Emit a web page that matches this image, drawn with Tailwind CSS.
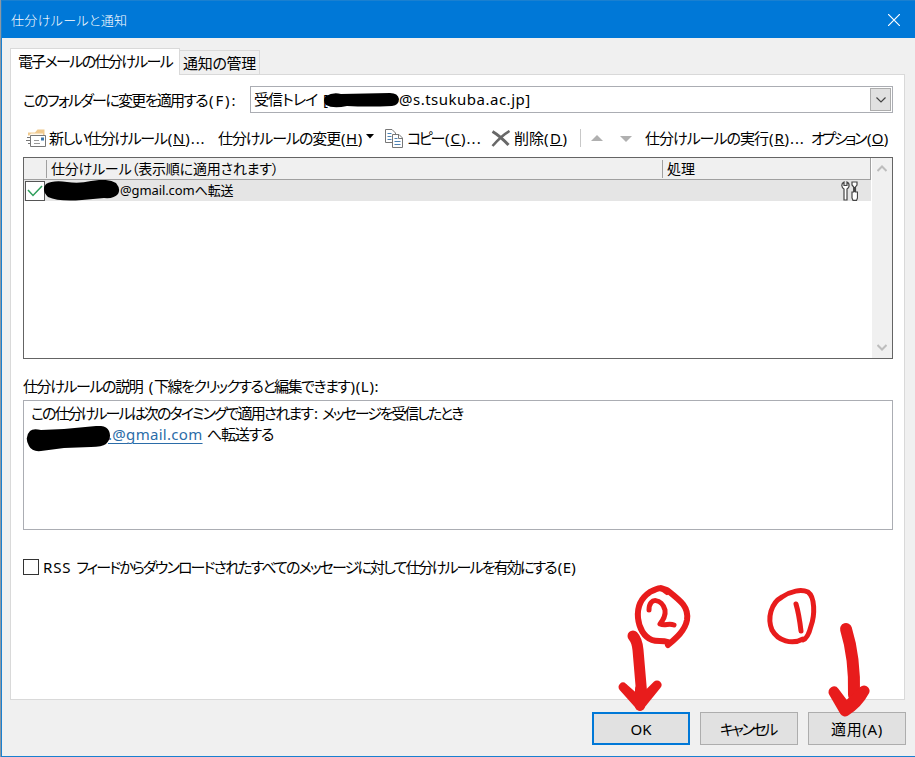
<!DOCTYPE html>
<html lang="ja">
<head>
    <meta charset="UTF-8">
    <meta name="viewport" content="width=device-width, initial-scale=1.0">
    <title>仕分けルールと通知</title>
    <script src="https://cdn.jsdelivr.net/npm/@tailwindcss/browser@4"></script>
</head>
<body class="relative flex h-[757px] w-[915px] overflow-hidden bg-[#8d98a3] pl-px font-['Noto_Sans','Noto_Sans_CJK_JP',sans-serif] text-[15px] leading-5 whitespace-nowrap text-black [font-feature-settings:'palt']">
    <div class="flex w-[914px] flex-col border-b border-l border-[#1a80d0] bg-[#f0f0f0]">
        <!-- Title bar -->
        <div class="flex h-[38px] shrink-0 items-center justify-between border-t border-[#1a80d0] bg-[#0078d7] pr-[15px] pl-[9px] text-white">
            <span class="text-[13px] font-light tracking-[0.35px]">仕分けルールと通知</span>
            <svg class="size-3" viewBox="0 0 12 12" fill="none" stroke="#fff" stroke-width="1.2"><path d="M0 0L12 12M12 0L0 12"/></svg>
        </div>

        <!-- Tabs -->
        <div class="flex h-9 shrink-0 items-end pl-2">
            <div class="relative z-10 -mb-px h-[27px] w-[170px] border border-b-0 border-[#d9d9d9] bg-white pt-[2px] pl-[7px]"><span class="tracking-[-1.65px]">電子メールの仕分けルール</span></div>
            <div class="h-6 w-20 border border-b-0 border-l-0 border-[#d9d9d9] pt-[2px] pl-[3px]"><span class="tracking-[-0.3px]">通知の管理</span></div>
        </div>

        <!-- Tab page -->
        <div class="ml-2 flex h-[626px] w-[895px] shrink-0 flex-col border border-[#d9d9d9] bg-white pr-[11px] pl-3">
            <div class="mt-[11px] flex h-[27px] shrink-0 items-center">
                <div class="w-[227px]"><span class="tracking-[-1.7px]">このフォルダーに変更を適用する</span><span class="ml-[2px] tracking-[1.9px]">(F):</span></div>
                <div class="flex h-[27px] w-[643px] items-center border border-[#abadb3] pr-px pl-[3px]">
                    <span class="-mt-px w-[69px] tracking-[-0.9px]">受信トレイ</span>
                    <span class="relative -mt-px w-[76px]">[<svg class="absolute top-[3px] left-0 h-4 w-[76px]" viewBox="0 0 76 16"><path d="M3 4Q10 0 18 2L67 1Q75 1 76 7Q76 13 69 14Q45 15 24 14Q10 17 3 13Q-1 8 3 4Z"/></svg></span>
                    <span class="-mt-px tracking-[0.5px]">@s.tsukuba.ac.jp]</span>
                    <div class="ml-auto flex h-[23px] w-[21px] items-center justify-center border border-[#adadad] bg-[#e1e1e1]">
                        <svg class="h-[6px] w-[10px]" viewBox="0 0 10 6" fill="none" stroke="#444" stroke-width="1.2"><path d="M.5 .5L5 5L9.5 .5"/></svg>
                    </div>
                </div>
            </div>

            <!-- Toolbar -->
            <div class="mt-[15px] flex h-5 shrink-0 items-center pl-[3px]">
                <svg class="h-[18px] w-[23px] shrink-0" viewBox="0 0 23 18" fill="none">
                    <path d="M2 6.500V3.500H9L11.500.5H18.500V6.500Z" fill="#efc98e"/><path d="M3 6.500L5 4.500H17V6.500Z" fill="#fff8ec"/>
                    <path d="M4.500 6.500h15v11h-15z" fill="#fff" stroke="#777"/><path d="M1 8.500h4M0 11.500h4M2 14.500h2" stroke="#777"/><path d="M8 11.500h5M8 14.500h6" stroke="#999"/><path d="M15 8.500h3v3h-3z" fill="#3a75ad"/>
                </svg>
                <div class="w-[169px] shrink-0"><span class="tracking-[-1.3px]">新しい仕分けルール</span><span class="ml-px tracking-[0.9px]">(<u>N</u>)...</span></div>
                <div class="w-[148px] shrink-0"><span class="tracking-[-1.1px]">仕分けルールの変更</span><span class="ml-px tracking-[0.5px]">(<u>H</u>)</span></div>
                <svg class="-mt-[3px] h-[5px] w-[9px] shrink-0" viewBox="0 0 9 5"><path d="M0 0H8L4 4.500Z"/></svg>
                <svg class="ml-[10px] h-[19px] w-[18px] shrink-0" viewBox="0 0 18 19" fill="none">
                    <path d="M7 13.500H.5V.5H7L10.500 4V6" stroke="#777"/><path d="M2.500 4.500h4M2.500 7.500h4M2.500 10.500h4" stroke="#4e83b4"/>
                    <path d="M7.500 5.500H14L17.500 9V18.500H7.500Z" fill="#fff" stroke="#777"/><path d="M13.500 5.500V9.500H17.500" stroke="#777"/><path d="M9.500 9.500h3M9.500 12.500h6M9.500 15.500h6" stroke="#4e83b4"/>
                </svg>
                <div class="ml-1 w-[84px] shrink-0"><span class="tracking-[-2.3px]">コピー</span><span class="ml-[2px] tracking-[1px]">(<u>C</u>)...</span></div>
                <svg class="h-[17px] w-5 shrink-0" viewBox="0 0 20 17" fill="none" stroke="#686868"><path d="M1.500 1.500Q9 6 17.500 15" stroke-width="3"/><path d="M18.500 1Q10 6 1.500 16" stroke-width="2.500"/></svg>
                <div class="ml-[3px] w-[66px] shrink-0"><span>削除</span><span class="tracking-[1.5px]">(<u>D</u>)</span></div>
                <div class="h-[18px] w-px shrink-0 bg-[#c8c8c8]"></div>
                <svg class="ml-[10px] h-[6px] w-3 shrink-0" viewBox="0 0 12 6"><path d="M0 6H12L6 0Z" fill="#b0b0b0"/></svg>
                <svg class="mt-[2px] ml-[17px] h-[6px] w-3 shrink-0" viewBox="0 0 12 6"><path d="M0 0H12L6 6Z" fill="#b0b0b0"/></svg>
                <div class="ml-[13px] w-[166px] shrink-0"><span class="tracking-[-1px]">仕分けルールの実行</span><span class="ml-px tracking-[0.9px]">(<u>R</u>)...</span></div>
                <div class="w-[80px] shrink-0"><span class="tracking-[-2.4px]">オプション</span><span class="ml-[2px] tracking-[0.3px]">(<u>O</u>)</span></div>
            </div>

            <!-- Rule list -->
            <div class="mt-[9px] flex h-[202px] w-[870px] shrink-0 border border-[#646464] text-sm">
                <div class="w-[847px]">
                    <div class="flex h-[22px] items-center border-r border-b border-[#a0a0a0] bg-[#f0f0f0]">
                        <div class="h-[18px] w-[23px] border-r border-[#a0a0a0]"></div>
                        <div class="flex h-[18px] w-[616px] items-center border-r border-[#a0a0a0] pl-1"><span class="tracking-[-0.2px]">仕分けルール（表示順に適用されます）</span></div>
                        <div class="pl-1"><span>処理</span></div>
                    </div>
                    <div class="flex h-[21px] items-center bg-[#e5e5e5] pl-px">
                        <div class="flex size-5 shrink-0 items-center justify-center border-[1.500px] border-[#555] bg-white">
                            <svg class="h-3 w-4" viewBox="0 0 16 12" fill="none" stroke="#2e9e5b" stroke-width="1.500"><path d="M1 5L6 10.500L15 1"/></svg>
                        </div>
                        <svg class="z-10 -ml-[2px] h-[21px] w-[77px] shrink-0" viewBox="0 0 77 21"><path d="M3 4Q10 0 24 2Q36 4 48 1Q65-2 73 3Q78 9 75 14Q71 19 61 18L39 20Q16 22 5 17Q-2 10 3 4Z"/></svg>
                        <span class="-mt-px text-[13px] tracking-[-0.1px]">@gmail.comへ転送</span>
                        <svg class="mr-[13px] ml-auto h-5 w-[17px] shrink-0" viewBox="0 0 17 20" fill="#fff" stroke="#444" stroke-width="1.200"><path d="M3 1V4.500H6V1Q8.500 2 8 5.500Q7.500 7 6 8V19H3V8Q1 7 .8 4.500Q.8 2 3 1Z"/><path d="M11 1H16V4L14.500 6V11H16.500V17L15.500 19.400H12L11 17V11H12.700V6L11 4Z"/><path d="M13.500 6V11" stroke-width="2"/></svg>
                    </div>
                </div>
                <div class="ml-px flex w-5 flex-col items-center justify-between bg-[#f0f0f0] pt-[6px] pb-[7px]">
                    <svg class="mt-px h-[7px] w-[10px]" viewBox="0 0 10 7" fill="none" stroke="#bdbdbd" stroke-width="2"><path d="M.5 6L5 1.500L9.500 6"/></svg>
                    <svg class="h-[7px] w-[10px]" viewBox="0 0 10 7" fill="none" stroke="#bdbdbd" stroke-width="2"><path d="M.5 1L5 5.500L9.500 1"/></svg>
                </div>
            </div>

            <!-- Rule description -->
            <div class="mt-[17px] h-5 shrink-0"><span class="tracking-[-1.4px]">仕分けルールの説明</span><span class="ml-[2px] tracking-[0.6px]"> (</span><span class="tracking-[-1.5px]">下線をクリックすると編集できます</span><span class="ml-px tracking-[0.7px]">)(L):</span></div>
            <div class="mt-1 h-[130px] w-[870px] shrink-0 border border-[#abadb3] pt-[2px] pl-[3px]">
                <div class="h-[21px] pl-1"><span class="tracking-[-1.9px]">この仕分けルールは次のタイミングで適用されます</span><span class="ml-[2px]">: </span><span class="tracking-[-2.1px]">メッセージを受信したとき</span></div>
                <div class="flex h-[22px]">
                    <svg class="z-10 mt-[2px] -ml-px h-7 w-[85px] shrink-0" viewBox="0 0 85 28"><path d="M4 5Q7 2 15 4L38 3L70 0Q80-1 83 5Q86 12 80 18Q76 21 65 21L38 22L15 25Q6 26 3 20Q-2 11 4 5Z"/></svg>
                    <div class="-ml-[3px] w-[99px] shrink-0"><span class="tracking-[0.3px] text-[#2b6ca8] underline underline-offset-3">.@gmail.com</span></div>
                    <span class="tracking-[-1.2px]">へ転送する</span>
                </div>
            </div>

            <div class="mt-[27px] flex h-5 shrink-0 items-center">
                <div class="size-4 border border-[#333]"></div>
                <div class="ml-1"><span class="tracking-[0.9px]">RSS </span><span class="tracking-[-1.88px]">フィードからダウンロードされたすべてのメッセージに対して仕分けルールを有効にする</span><span class="ml-[2px] tracking-[0.3px]">(E)</span></div>
            </div>
        </div>

        <!-- Dialog buttons -->
        <div class="mt-3 flex h-[33px] shrink-0 justify-end gap-[10px] pr-[9px]">
            <button class="w-[98px] border-2 border-[#0078d7] bg-[#e1e1e1]">OK</button>
            <button class="w-[98px] border border-[#adadad] bg-[#e1e1e1] pr-[2px] tracking-[-2.4px]">キャンセル</button>
            <button class="w-[98px] border border-[#adadad] bg-[#e1e1e1] tracking-[0.7px]">適用(A)</button>
        </div>
    </div>

    <!-- Handwritten marks: press 1 first, then 2 -->
    <svg class="absolute top-[570px] left-[600px] z-20 h-[187px] w-[315px]" viewBox="0 0 315 187" fill="none" stroke="#e81c1c" stroke-linecap="round" stroke-linejoin="round">
        <path d="M67 22C61 16 58 18 50 22C41 28 37 37 38 48C39 58 44 67 52 70C57 72 62 70 68 72M68 75C75 69 85 61 87 50C89 37 81 31 67 20L61 18" stroke-width="6"/>
        <path d="M49 40C49 26 62 29 65 40C66 46 63 50 60 54C65 56 69 53 74 55" stroke-width="5"/>
        <path d="M33 66Q37 70 38 80L42 127" stroke-width="11"/>
        <path d="M23 117L40 132L57 115L40 136Z" fill="#e81c1c" stroke-width="9"/><path d="M40 119V136" stroke-width="10"/>
        <path d="M203 69C192 75 178 71 172 60C167 48 171 33 182 27C191 21 201 19 208 22C215 27 215 45 211 56C209 64 206 69 203 70" stroke-width="5"/>
        <path d="M196 34Q199 44 201 61" stroke-width="5"/>
        <path d="M246 59Q255 88 254 125" stroke-width="12"/>
        <path d="M234 122L246 138L264 121Q257 134 245 141Z" fill="#e81c1c" stroke-width="11"/>
    </svg>
</body>
</html>
